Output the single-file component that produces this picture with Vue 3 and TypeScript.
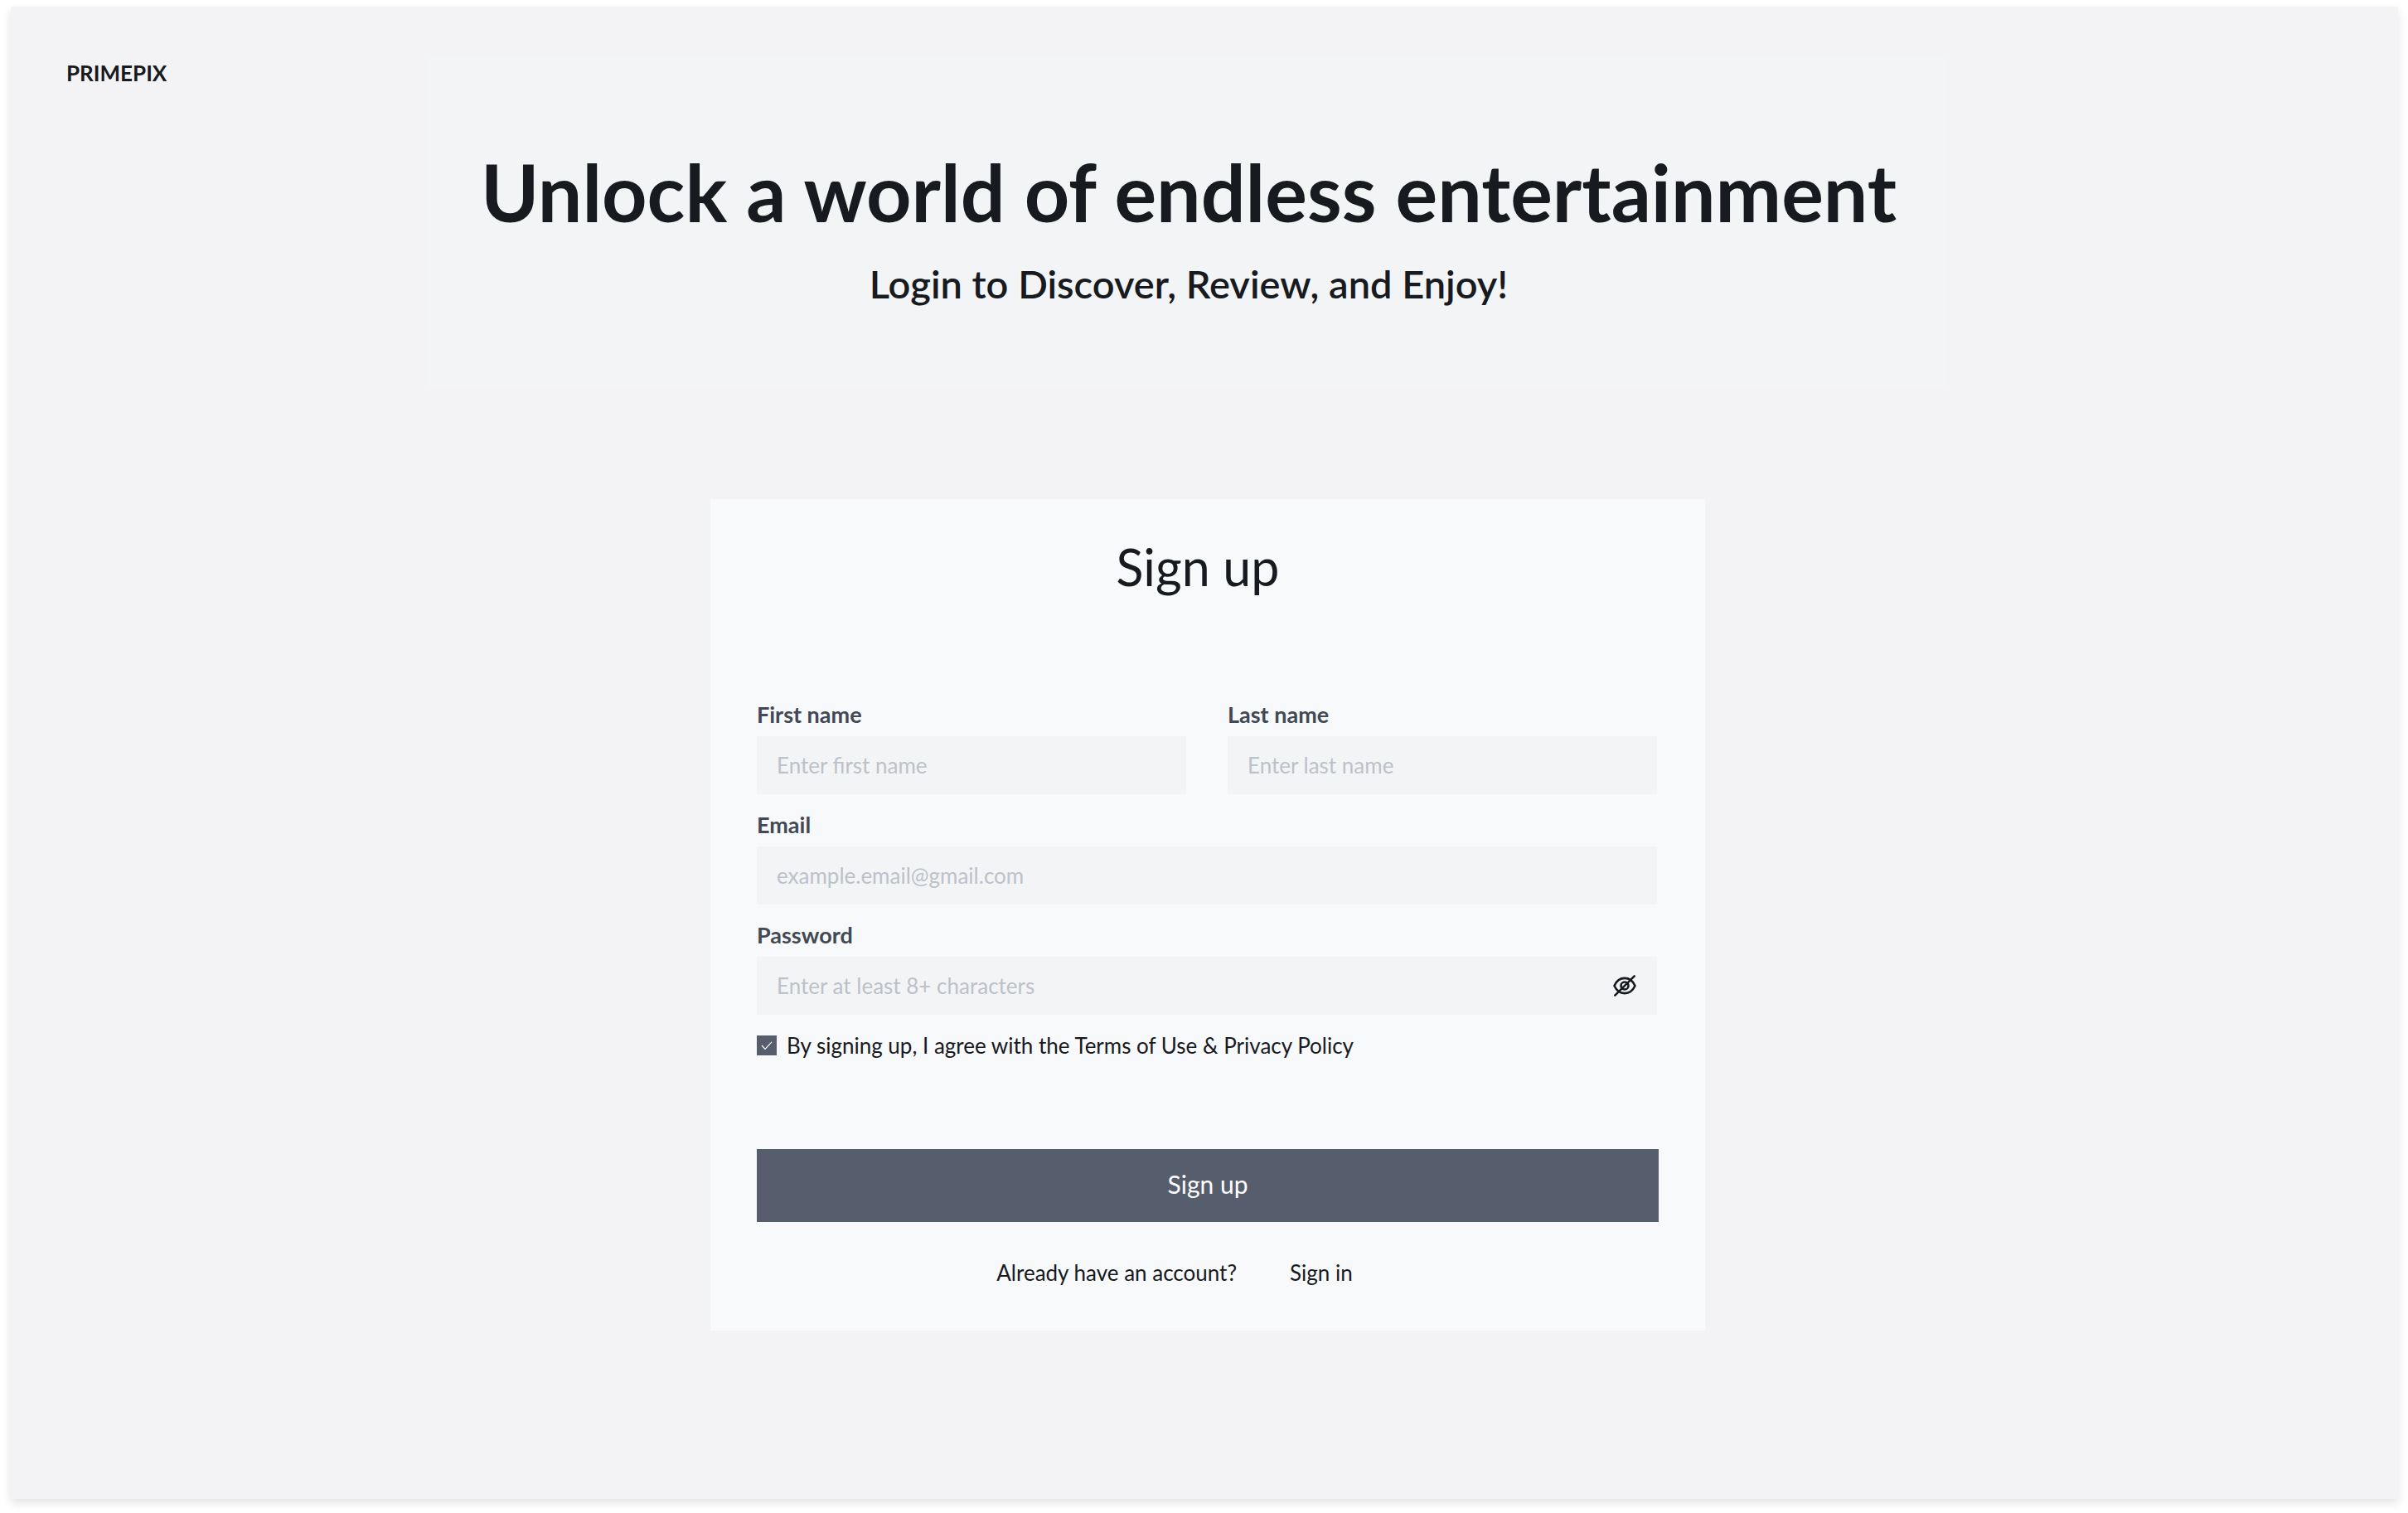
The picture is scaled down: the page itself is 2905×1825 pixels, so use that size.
<script setup lang="ts">
import { ref } from 'vue'

const firstName = ref<string>('')
const lastName = ref<string>('')
const email = ref<string>('')
const password = ref<string>('')
const agreed = ref<boolean>(true)
const passwordVisible = ref<boolean>(false)
</script>

<template>
  <div class="board">
    <header class="top">
      <a class="logo" href="#">PRIMEPIX</a>
      <div class="hero">
        <h1 class="headline">Unlock a world of endless entertainment</h1>
        <p class="tagline">Login to Discover, Review, and Enjoy!</p>
      </div>
    </header>

    <main class="content">
      <form class="card" @submit.prevent>
        <h2 class="title">Sign up</h2>

        <div class="fields">
          <div class="row">
            <div class="field">
              <label class="label" for="first-name">First name</label>
              <input id="first-name" v-model="firstName" class="input" type="text" placeholder="Enter first name" />
            </div>
            <div class="field">
              <label class="label" for="last-name">Last name</label>
              <input id="last-name" v-model="lastName" class="input" type="text" placeholder="Enter last name" />
            </div>
          </div>
          <div class="field">
            <label class="label" for="email">Email</label>
            <input id="email" v-model="email" class="input" type="email" placeholder="example.email@gmail.com" />
          </div>
          <div class="field">
            <label class="label" for="password">Password</label>
            <div class="input-wrap">
              <input
                id="password"
                v-model="password"
                class="input"
                :type="passwordVisible ? 'text' : 'password'"
                placeholder="Enter at least 8+ characters"
              />
              <button
                class="toggle"
                type="button"
                aria-label="Toggle password visibility"
                @click="passwordVisible = !passwordVisible"
              >
                <svg viewBox="0 0 30 30" width="30" height="30" fill="none" stroke="currentColor" stroke-width="2.6" stroke-linecap="round" stroke-linejoin="round">
                  <path d="M2.5 15C5.5 8.4 9.8 5.9 15 5.9S24.5 8.4 27.5 15C24.5 21.6 20.2 24.1 15 24.1S5.5 21.6 2.5 15Z" />
                  <circle cx="15" cy="15" r="4.5" />
                  <path d="M3.3 26.7L26.7 3.3" />
                </svg>
              </button>
            </div>
          </div>
          <label class="agree">
            <span class="tick">
              <input v-model="agreed" class="tick-box" type="checkbox" />
              <svg v-if="agreed" class="tick-mark" viewBox="0 0 24 24" fill="none" stroke="currentColor" stroke-width="1.2">
                <path d="M6 12L10 16.3L18 7.8" />
              </svg>
            </span>
            <span>By signing up, I agree with the Terms of Use &amp; Privacy Policy</span>
          </label>
        </div>

        <button class="submit" type="submit">Sign up</button>

        <p class="switch">
          <span>Already have an account?</span>
          <a class="link" href="#">Sign in</a>
        </p>
      </form>
    </main>
  </div>
</template>

<style>
body {
  margin: 0;
  background: #ffffff;
}
</style>

<style scoped>
.board {
  box-sizing: border-box;
  min-height: calc(100vh - 25px);
  margin: 8px 12px 17px 13px;
  padding: 60px 0;
  background: #f3f3f5;
  box-shadow: 0 5px 10px rgba(23, 26, 31, 0.12);
  color: #171a1f;
  font-family: Lato, "Noto Sans", sans-serif;
}

.top {
  display: grid;
  grid-template-columns: 505fr 1828fr 547fr;
  align-items: start;
}

.logo {
  padding-left: 67px;
  color: inherit;
  font-size: 26px;
  font-weight: 700;
  line-height: 40px;
  text-decoration: none;
}

.hero {
  padding: 115px 12px 93px 16px;
  background: #f3f4f6;
  text-align: center;
}

.headline {
  margin: 0;
  font-size: 95px;
  font-weight: 700;
  line-height: 96px;
  white-space: nowrap;
}

.tagline {
  margin: 31px 0 0;
  font-size: 47px;
  font-weight: 600;
  line-height: 64px;
}

.content {
  display: flex;
  justify-content: center;
  padding: 135px 0 0 8px;
}

.card {
  box-sizing: border-box;
  width: 100%;
  max-width: 1200px;
  padding: 50px 56px;
  background: #f8f9fb;
}

.title {
  margin: 0 24px 0 0;
  font-size: 61px;
  font-weight: 400;
  line-height: 64px;
  text-align: center;
}

.fields {
  display: flex;
  flex-direction: column;
  gap: 17px;
  margin-top: 126px;
  padding-right: 2px;
}

.row {
  display: grid;
  grid-template-columns: 1fr 1fr;
  gap: 50px;
}

.field {
  display: flex;
  flex-direction: column;
  gap: 6px;
}

.label {
  color: #424955;
  font-size: 27px;
  font-weight: 700;
  line-height: 40px;
}

.input-wrap {
  position: relative;
}

.input {
  box-sizing: border-box;
  width: 100%;
  height: 70px;
  padding: 0 24px;
  border: 0;
  border-radius: 0;
  outline: 0;
  background: #f3f4f6;
  color: #171a1f;
  font-family: inherit;
  font-size: 26px;
}

.input::placeholder {
  color: #bdc1ca;
  opacity: 1;
}

.toggle {
  position: absolute;
  top: 20px;
  right: 24px;
  display: flex;
  padding: 0;
  border: 0;
  background: none;
  color: #171a1f;
  cursor: pointer;
}

.agree {
  display: flex;
  align-items: center;
  gap: 12px;
  font-size: 26px;
  line-height: 40px;
}

.tick {
  position: relative;
  display: flex;
}

.tick-box {
  width: 24px;
  height: 24px;
  margin: 0;
  appearance: none;
  border: 1px solid #565d6d;
  background: #f8f9fb;
}

.tick-box:checked {
  background: #565d6d;
}

.tick-mark {
  position: absolute;
  inset: 0;
  color: #ffffff;
  pointer-events: none;
}

.submit {
  display: block;
  width: 100%;
  height: 88px;
  margin-top: 105px;
  padding: 0 0 4px;
  border: 0;
  background: #565d6d;
  color: #ffffff;
  font-family: inherit;
  font-size: 30px;
  cursor: pointer;
}

.switch {
  display: flex;
  justify-content: center;
  gap: 64px;
  margin: 41px 80px 0 0;
  font-size: 26px;
  line-height: 40px;
}

.link {
  color: inherit;
  text-decoration: none;
}
</style>
